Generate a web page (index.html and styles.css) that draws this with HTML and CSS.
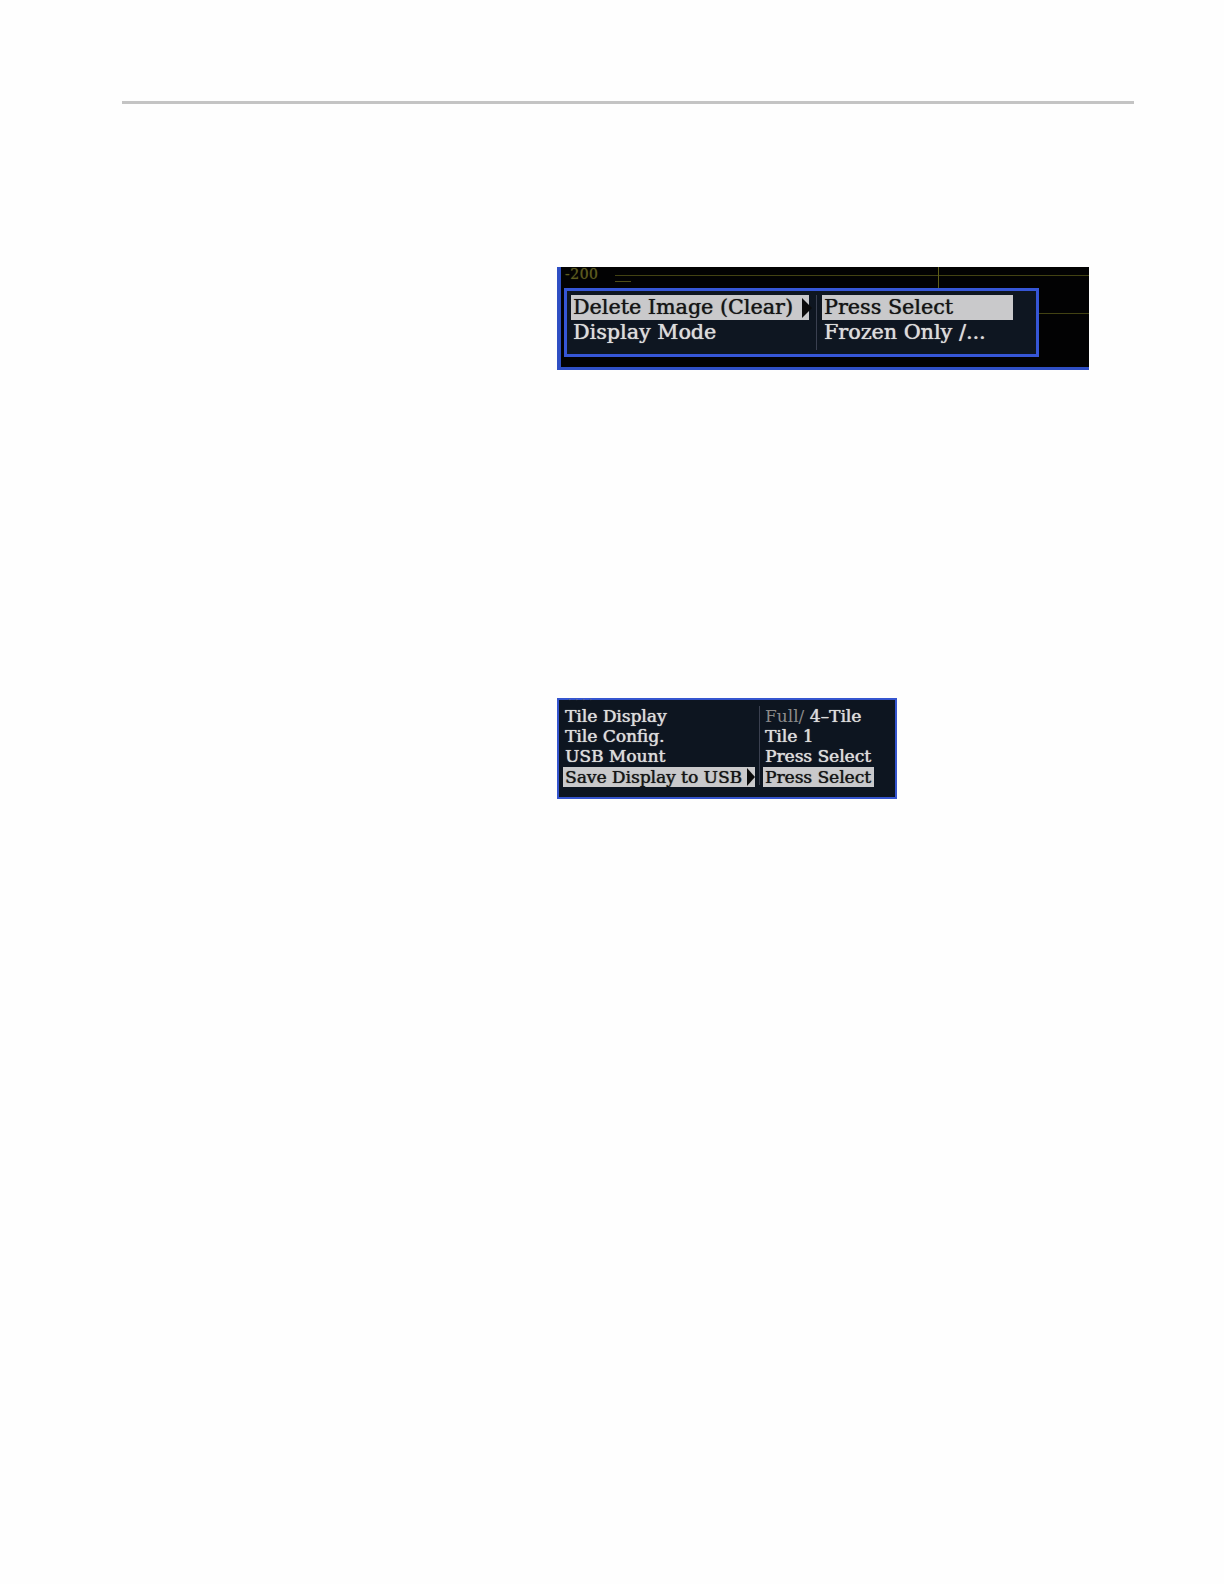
FILE: index.html
```html
<!DOCTYPE html>
<html>
<head>
<meta charset="utf-8">
<link rel="stylesheet" href="styles.css">
</head>
<body>
<div class="page">
  <div class="rule"></div>

  <div class="shot shot1">
    <div class="scope-label">-200</div>
    <div class="scope-under"></div>
    <div class="scope-hline top"></div>
    <div class="scope-vline"></div>
    <div class="scope-hline mid"></div>
    <div class="menu menu1">
      <div class="col left">
        <div class="item sel">Delete Image (Clear)<span class="arrow"></span></div>
        <div class="item">Display Mode</div>
      </div>
      <div class="divider"></div>
      <div class="col right">
        <div class="item sel val">Press Select</div>
        <div class="item">Frozen Only /...</div>
      </div>
    </div>
  </div>

  <div class="shot shot2">
    <div class="ghost">˙˙˙˙</div>
    <div class="menu menu2">
      <div class="col left">
        <div class="item">Tile Display</div>
        <div class="item">Tile Config.</div>
        <div class="item">USB Mount</div>
        <div class="item sel">Save Display to USB<span class="arrow"></span></div>
      </div>
      <div class="divider"></div>
      <div class="col right">
        <div class="item"><span class="dim">Full/</span> 4–Tile</div>
        <div class="item">Tile 1</div>
        <div class="item">Press Select</div>
        <div class="item sel val">Press Select</div>
      </div>
    </div>
  </div>
</div>
</body>
</html>
```

FILE: styles.css
```css
html, body {
  margin: 0;
  padding: 0;
  background: #fefefe;
  overflow: hidden;
}
.page {
  width: 1224px;
  padding-top: 101px;
  box-sizing: border-box;
}
.rule {
  margin-left: 122px;
  width: 1012px;
  height: 3px;
  background: #c4c4c4;
}

.shot {
  position: relative;
  margin-left: 557px;
  box-sizing: border-box;
  font-family: "DejaVu Serif", serif;
  color: #dcdcdc;
  text-shadow: 0 0 1px rgba(220, 220, 220, 0.8), 0.5px 0 0 rgba(220, 220, 220, 0.6);
}

/* ---------- first screenshot ---------- */
.shot1 {
  margin-top: 163px;
  width: 532px;
  height: 103px;
  background: #020203;
  border-left: 4px solid #2f4fc4;
  border-bottom: 3px solid #2f4fc4;
  padding: 21px 0 0 3px;
  overflow: hidden;
}
.scope-label {
  position: absolute;
  left: 4px;
  top: 0;
  font-size: 14px;
  color: #5d5c1e;
  text-shadow: 0 0 1px rgba(93, 92, 30, 0.8);
  line-height: 14px;
  letter-spacing: 0.5px;
}
.scope-under {
  position: absolute;
  left: 54px;
  top: 14px;
  width: 16px;
  height: 1px;
  background: #4f4e18;
}
.scope-hline {
  position: absolute;
  height: 1px;
  background: #424213;
}
.scope-hline.top {
  left: 54px;
  right: 0;
  top: 8px;
}
.scope-hline.mid {
  left: 478px;
  right: 0;
  top: 46px;
}
.scope-vline {
  position: absolute;
  left: 377px;
  top: 0;
  width: 1px;
  height: 21px;
  background: #5e5e18;
}
.menu {
  display: flex;
  box-sizing: border-box;
  background: #0e1621;
  border: 3px solid #3656d6;
  position: relative;
}
.menu1 {
  width: 475px;
  height: 69px;
  padding: 4px 0 0 4px;
  font-size: 20.5px;
  letter-spacing: 0.1px;
}
.col {
  display: flex;
  flex-direction: column;
}
.menu1 .left { width: 238px; }
.menu1 .item {
  height: 25px;
  line-height: 25px;
  white-space: nowrap;
  position: relative;
  padding-left: 2px;
}
.item.sel {
  background: #c9c9cb;
  color: #141414;
  text-shadow: 0 0 1px rgba(20, 20, 20, 0.6), 0.5px 0 0 rgba(20, 20, 20, 0.5);
}
.arrow {
  position: absolute;
  right: -3px;
  top: 50%;
  transform: translateY(-50%);
  width: 0;
  height: 0;
  border-top: 10px solid transparent;
  border-bottom: 10px solid transparent;
  border-left: 10px solid #0b0b0b;
}
.divider {
  width: 1px;
  background: #3a4050;
}
.menu1 .divider {
  margin: 0 5px 4px 7px;
}
.menu1 .right { width: 191px; }

/* ---------- second screenshot ---------- */
.shot2 {
  margin-top: 328px;
  width: 340px;
  height: 101px;
  background: #0d1520;
  border: 2px solid #3555cf;
  padding: 6px 0 0 4px;
}
.ghost {
  position: absolute;
  left: 8px;
  top: -2px;
  font-size: 10px;
  line-height: 10px;
  letter-spacing: 2px;
  color: #707070;
  text-shadow: none;
}
.menu2 {
  border: none;
  background: transparent;
  font-size: 17px;
}
.menu2 .item {
  height: 20.2px;
  line-height: 20px;
  white-space: nowrap;
  position: relative;
  padding-left: 2px;
}
.menu2 .left { width: 192px; }
.menu2 .arrow {
  border-top-width: 9px;
  border-bottom-width: 9px;
  border-left-width: 8px;
  right: 0;
}
.menu2 .divider {
  margin: 0 3px 2px 4px;
}
.menu2 .right { width: 111px; }
.dim {
  color: #8a8a8a;
  text-shadow: none;
}
```
